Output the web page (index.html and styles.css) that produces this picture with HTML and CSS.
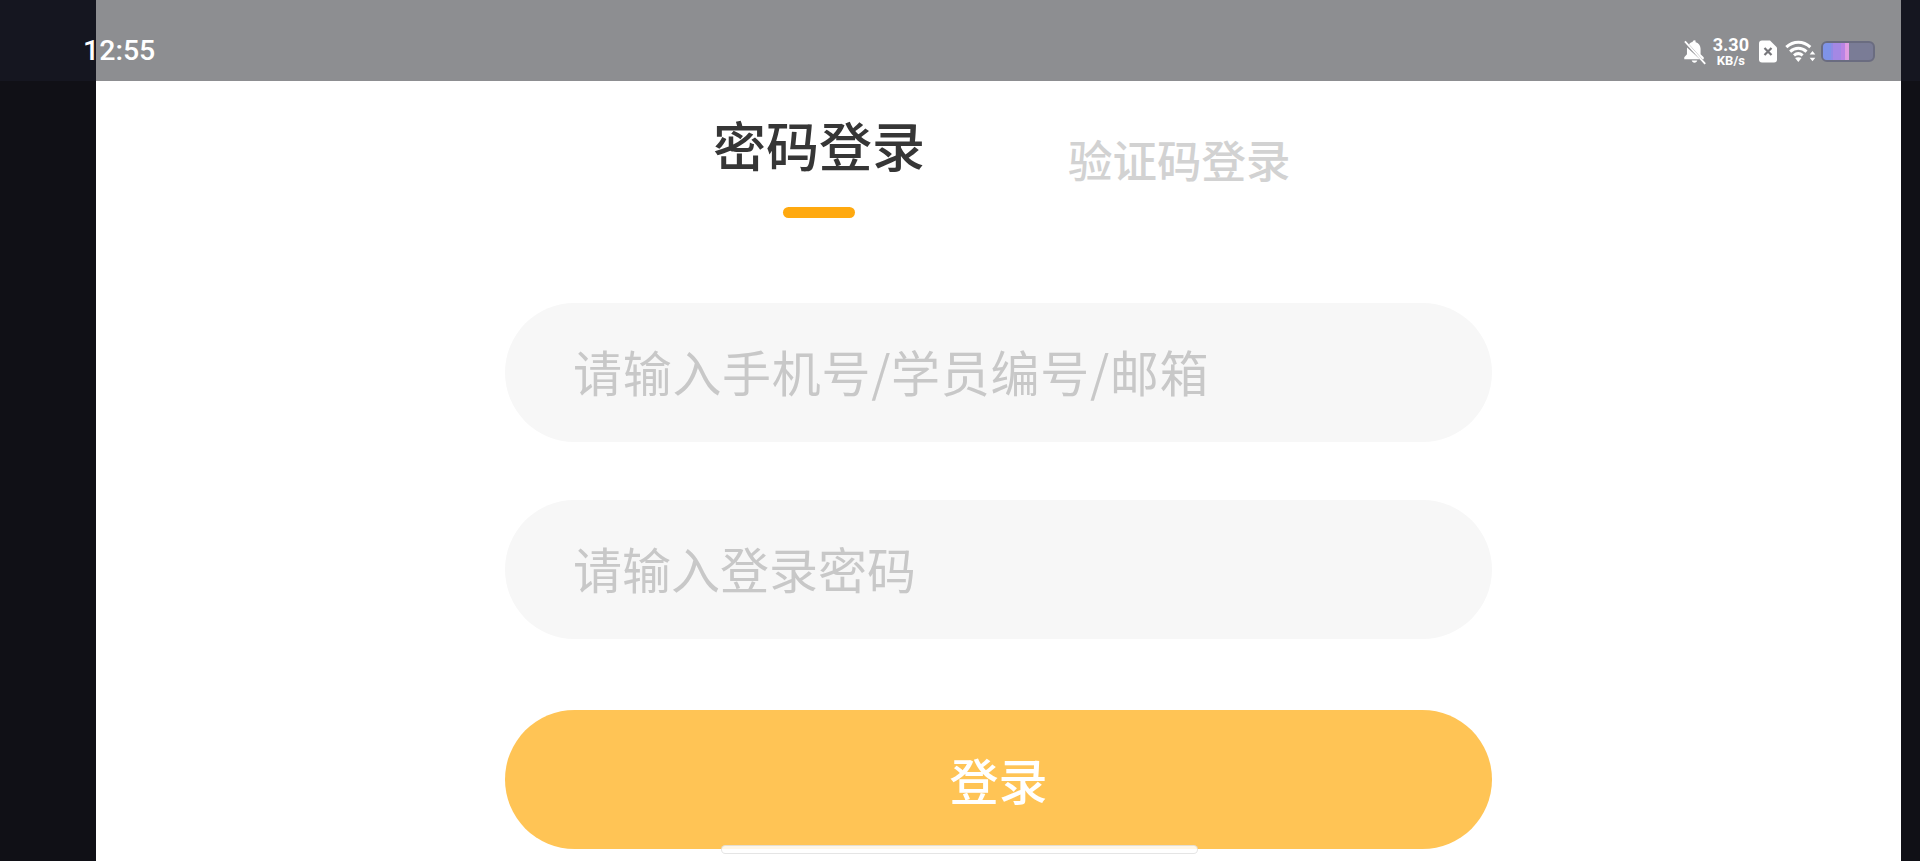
FILE: index.html
```html
<!DOCTYPE html>
<html lang="zh-CN">
<head>
  <meta charset="UTF-8" />
  <title>登录</title>
  <link rel="stylesheet" href="styles.css">
</head>
<body>

  <div class="status-bar">
    <span class="time">12:55</span>
    <div class="status-icons">
      <svg class="icon-bell" viewBox="0 0 24 24" width="27" height="27">
        <path d="M12 2c-1 0-1.600.7-1.700 1.500-1.300.3-2.400 1-3.200 2l12 13.300h1.100V17l-2.800-2.600V9.600c0-3-1.800-5.400-4.700-6.100C13.600 2.700 13 2 12 2zM5.400 8.500c0 .4-.1.700-.1 1.100v4.800L2.900 17v1.800h13.900zM9.500 20c.2 1.100 1.300 2 2.500 2s2.300-.9 2.500-2z" fill="#fff"/>
        <path d="M3.500 3l18 20" stroke="#fff" stroke-width="1.600" fill="none"/>
      </svg>
      <div class="speed">
        <span class="speed-num">3.30</span>
        <span class="speed-unit">KB/s</span>
      </div>
      <svg class="icon-sim" viewBox="0 0 18 22" width="18" height="23">
        <path d="M3 0h8l7 7v12a3 3 0 0 1-3 3H3a3 3 0 0 1-3-3V3a3 3 0 0 1 3-3z" fill="#fff"/>
        <path d="M5.500 7.500l7 7M12.500 7.500l-7 7" stroke="#77777b" stroke-width="2.200" fill="none"/>
      </svg>
      <svg class="icon-wifi" viewBox="0 0 28 22" width="31" height="24">
        <path d="M1 7.500c6.500-6 15.500-6 22 0M4.500 11.500c4.500-4 10.500-4 15 0M8 15c2.500-2 5.500-2 8 0" stroke="#fff" stroke-width="2.800" fill="none"/>
        <path d="M9 17.500L12 21l3-3.500c-1.500-1-4.500-1-6 0z" fill="#fff"/>
        <path d="M25 11l2.600 3.200h-5.200zM25 20.500l2.600-3.200h-5.200z" fill="#fff"/>
      </svg>
      <div class="battery"><div class="battery-fill"></div></div>
    </div>
  </div>

  <div class="side side-left"></div>

  <main class="screen">
    <div class="tabs">
      <div class="tab active">
        <span>密码登录</span>
        <div class="tab-line"></div>
      </div>
      <div class="tab">验证码登录</div>
    </div>

    <form class="login-form">
      <input class="field field-account" type="text" placeholder="请输入手机号/学员编号/邮箱" />
      <input class="field" type="password" placeholder="请输入登录密码" />
      <button class="login-btn" type="button">登录</button>
    </form>

    <div class="home-pill"></div>
  </main>

  <div class="side side-right"></div>

</body>
</html>
```

FILE: styles.css
```css
*, *::before, *::after {
  box-sizing: border-box;
}

html, body {
  height: 100%;
}

body {
  margin: 0;
  display: flex;
  height: 861px;
  overflow: hidden;
  position: relative;
  background: #101016;
  font-family: "Noto Sans CJK SC", "Noto Sans", sans-serif;
}

.side-left {
  width: 96px;
  flex: none;
  background: #101016;
}

.side-right {
  width: 19px;
  flex: none;
  background: #101016;
}

.screen {
  flex: 1;
  position: relative;
  background: #fff;
  padding-top: 80px;
}

/* status bar sits on top of the app */
.status-bar {
  position: absolute;
  top: 0;
  left: 0;
  right: 0;
  height: 81px;
  z-index: 5;
  display: flex;
  align-items: center;
  justify-content: space-between;
  padding: 0 45px 0 83px;
  background: linear-gradient(to right, #151620 96px, #8d8e91 96px, #8d8e91 1901px, #151620 1901px);
  color: #fff;
}

.time {
  font-family: Roboto, sans-serif;
  font-weight: 500;
  font-size: 28.5px;
  margin-top: 20px;
}

.status-icons {
  display: flex;
  align-items: center;
  gap: 8px;
  margin-top: 21px;
}

.icon-bell {
  margin-right: -5px;
}

.icon-wifi {
  margin-right: -3px;
}

.speed {
  display: flex;
  flex-direction: column;
  align-items: center;
  font-family: Roboto, sans-serif;
  font-weight: 700;
  line-height: 1;
  margin: 0 2px;
}

.speed-num {
  font-size: 18px;
}

.speed-unit {
  font-size: 13px;
}

.battery {
  width: 54px;
  height: 21px;
  border-radius: 6px;
  background: #7a7c96;
  border: 2px solid #6a6c80;
  overflow: hidden;
}

.battery-fill {
  width: 26px;
  height: 100%;
  background: linear-gradient(to right, #7f93e8 0 30%, #8f8be6 30% 40%, #a488e4 40% 70%, #b884e4 70% 85%, #e09ce2 85%);
}

.tabs {
  display: flex;
  align-items: flex-start;
  gap: 143px;
  margin-left: 617px;
}

.tab {
  font-size: 44.5px;
  line-height: 60px;
  font-weight: 500;
  color: #d2d2d2;
  margin-top: 49px;
}

.tab.active {
  display: flex;
  flex-direction: column;
  align-items: center;
  font-size: 53px;
  line-height: 74px;
  color: #363636;
  margin-top: 31px;
}

.tab.active span {
  margin-top: -4px;
  margin-bottom: 4px;
}

.tab-line {
  width: 72px;
  height: 11px;
  margin-top: 22px;
  border-radius: 6px;
  background: #ffa90f;
}

.login-form {
  display: flex;
  flex-direction: column;
  width: 987px;
  margin: 85px 0 0 409px;
}

.field {
  height: 139px;
  border: none;
  outline: none;
  border-radius: 70px;
  background: #f7f7f7;
  padding: 0 60px 5px 68px;
  margin-bottom: 58px;
  font-family: inherit;
  font-size: 49px;
}

.field-account {
  letter-spacing: 0.7px;
}

.field::placeholder {
  color: #c8c8c8;
}

.login-btn {
  height: 139px;
  margin-top: 13px;
  padding: 0 0 2px;
  border: none;
  border-radius: 70px;
  background: #ffc455;
  color: #fff;
  font-family: inherit;
  font-size: 49px;
  font-weight: 500;
}

.home-pill {
  position: absolute;
  left: 625px;
  top: 845px;
  width: 477px;
  height: 9px;
  border-radius: 5px;
  background: rgba(255, 255, 255, 0.85);
  border: 1px solid rgba(150, 150, 150, 0.25);
}
```
